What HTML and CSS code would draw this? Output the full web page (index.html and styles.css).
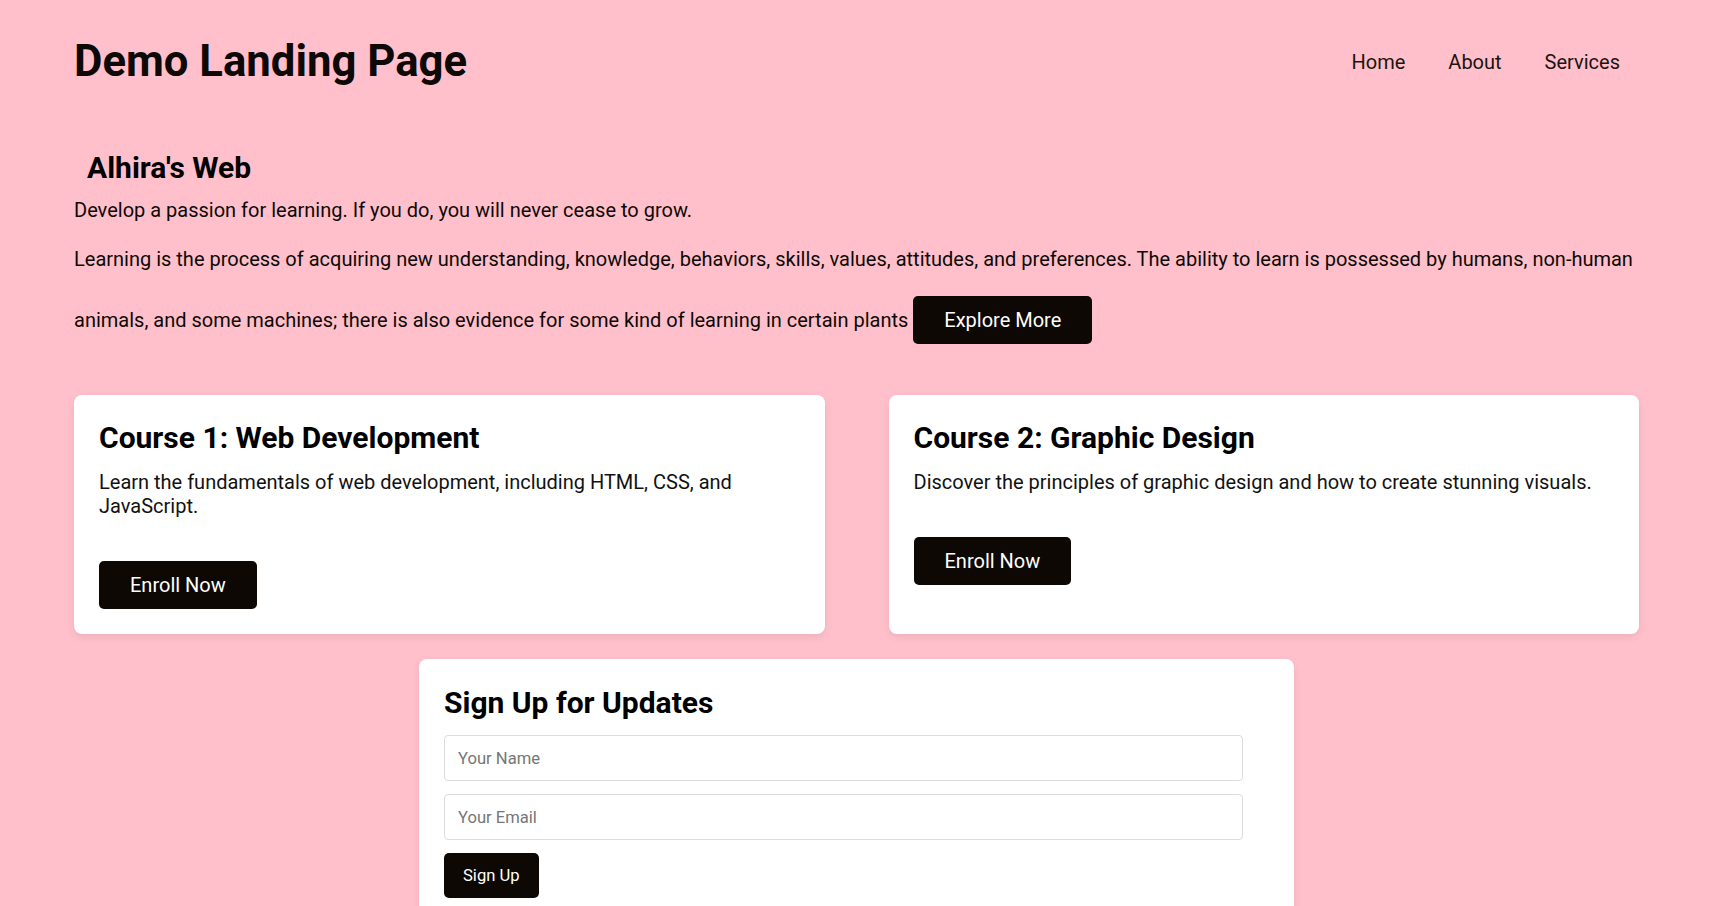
FILE: index.html
```html
<!DOCTYPE html>
<html lang="en">
<head>
<meta charset="utf-8">
<title>Demo Landing Page</title>
<link rel="stylesheet" href="styles.css">
</head>
<body>
<div class="page">
  <header class="site-header">
    <h1 class="logo">Demo Landing Page</h1>
    <nav class="nav">
      <a href="#" class="nav-link">Home</a>
      <a href="#" class="nav-link">About</a>
      <a href="#" class="nav-link">Services</a>
    </nav>
  </header>

  <section class="hero">
    <h2 class="hero-title">Alhira's Web</h2>
    <p class="hero-lead">Develop a passion for learning. If you do, you will never cease to grow.</p>
    <p class="hero-text">Learning is the process of acquiring new understanding, knowledge, behaviors, skills, values, attitudes, and preferences. The ability to learn is possessed by humans, non-human animals, and some machines; there is also evidence for some kind of learning in certain plants <a href="#" class="btn btn-inline">Explore More</a></p>
  </section>

  <section class="courses">
    <article class="card course">
      <h3 class="card-title">Course 1: Web Development</h3>
      <p class="card-text">Learn the fundamentals of web development, including HTML, CSS, and JavaScript.</p>
      <a href="#" class="btn">Enroll Now</a>
    </article>
    <article class="card course">
      <h3 class="card-title">Course 2: Graphic Design</h3>
      <p class="card-text">Discover the principles of graphic design and how to create stunning visuals.</p>
      <a href="#" class="btn">Enroll Now</a>
    </article>
  </section>

  <section class="card signup">
    <h2 class="signup-title">Sign Up for Updates</h2>
    <form class="signup-form">
      <input class="field" type="text" placeholder="Your Name">
      <input class="field" type="email" placeholder="Your Email">
      <button type="button" class="btn-small">Sign Up</button>
    </form>
  </section>
</div>
</body>
</html>
```

FILE: styles.css
```css
* { box-sizing: border-box; }

html, body {
  margin: 0;
  padding: 0;
}

body {
  background: #ffc0cb;
  font-family: Roboto, "Liberation Sans", Arial, sans-serif;
  font-size: 20px;
  line-height: normal;
  color: #0d0906;
}

.page {
  padding: 0 83px 40px 74px;
}

.site-header {
  display: flex;
  justify-content: space-between;
  align-items: center;
  padding-top: 35px;
}

.logo {
  margin: 0;
  font-size: 43.7px;
  line-height: normal;
  font-weight: 700;
  color: #0d0906;
}

.nav {
  display: flex;
  gap: 43px;
  padding-right: 19px;
  padding-top: 2px;
}

.nav-link {
  font-size: 20px;
  color: #1a1410;
  text-decoration: none;
}

.hero {
  padding-top: 63px;
}

.hero-title {
  margin: 0;
  padding-left: 13px;
  font-size: 30px;
  line-height: normal;
  font-weight: 700;
  color: #000;
}

.hero-lead {
  margin: 13px 0 25px;
}

.hero-text {
  margin: 0;
}

.btn {
  display: inline-block;
  background: #0d0804;
  color: #fff;
  font-size: 20px;
  line-height: 24px;
  padding: 12px 31px;
  border-radius: 5px;
  text-decoration: none;
}

.btn-inline {
  margin-top: 25px;
}

.courses {
  display: grid;
  grid-template-columns: 1fr 1fr;
  gap: 64px;
  margin-top: 51px;
}

.card {
  background: #fff;
  border-radius: 8px;
  box-shadow: 0 3px 8px rgba(0, 0, 0, 0.08);
}

.course {
  display: flex;
  flex-direction: column;
  align-items: flex-start;
  padding: 25px;
}

.card-title {
  margin: 0 0 15px;
  font-size: 30px;
  line-height: normal;
  font-weight: 700;
  color: #000;
}

.card-text {
  margin: 0 0 20px;
  color: #111;
}

.course .btn {
  margin-top: 23px;
}

.signup {
  width: 875px;
  margin: 25px auto 0;
  padding: 26px 25px 25px;
}

.signup-title {
  margin: 0 0 15px;
  font-size: 30px;
  line-height: normal;
  font-weight: 700;
  color: #000;
}

.signup-form {
  display: flex;
  flex-direction: column;
  align-items: flex-start;
  gap: 13px;
}

.field {
  display: block;
  width: calc(100% - 26px);
  height: 46px;
  padding: 0 13px;
  border: 1px solid #dcdcdc;
  border-radius: 4px;
  font-family: Roboto, "Liberation Sans", Arial, sans-serif;
  font-size: 16.6px;
  color: #222;
  background: #fff;
}

.field::placeholder {
  color: #767676;
}

.btn-small {
  background: #0d0804;
  color: #fff;
  border: none;
  border-radius: 5px;
  font-family: Roboto, "Liberation Sans", Arial, sans-serif;
  font-size: 16.6px;
  line-height: 19px;
  padding: 13px 19px;
}
```
